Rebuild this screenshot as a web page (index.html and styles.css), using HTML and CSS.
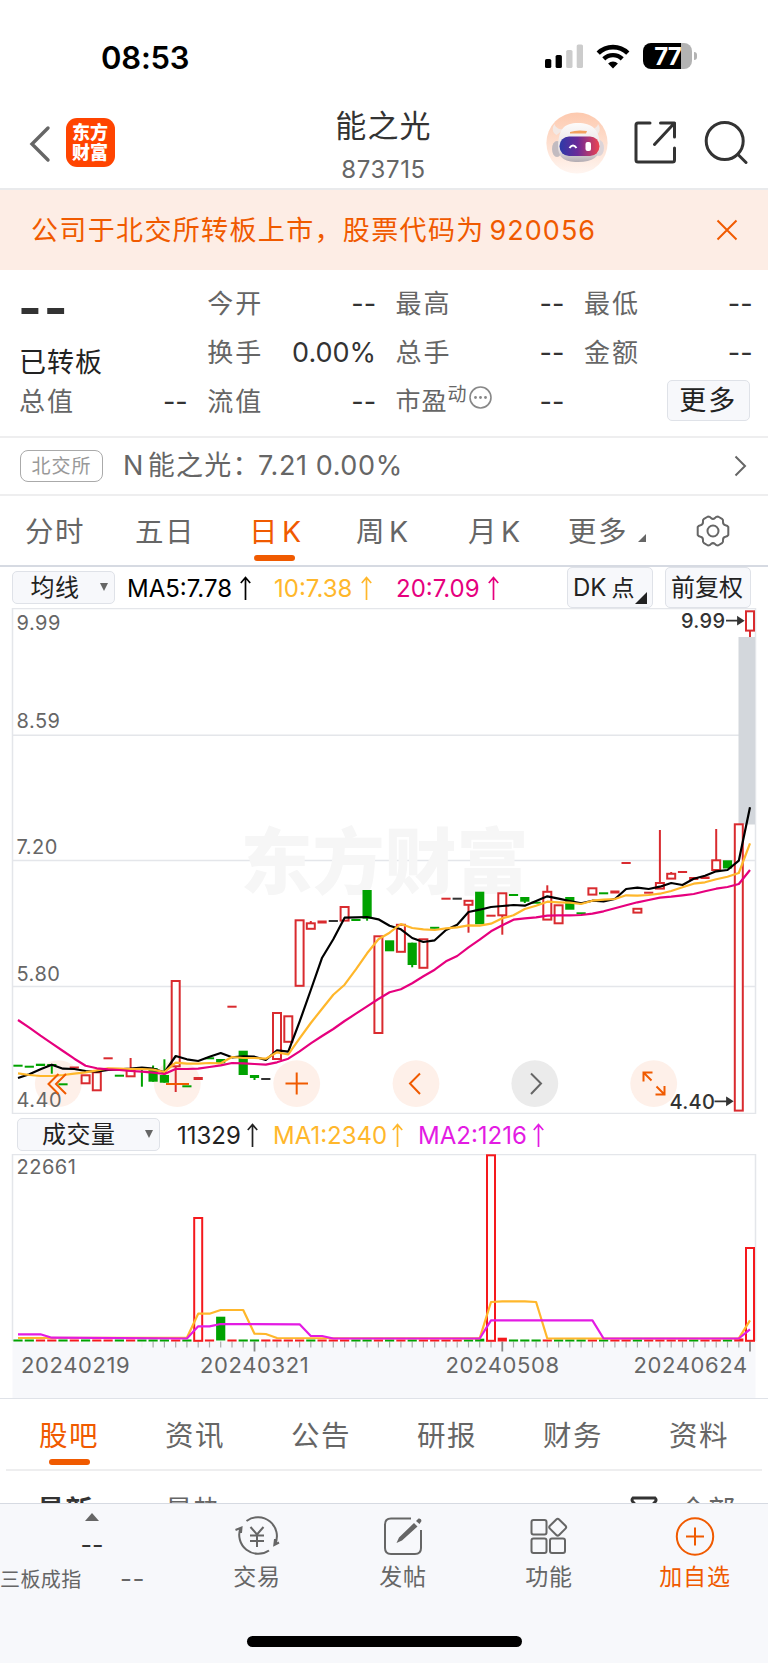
FILE: index.html
```
<!DOCTYPE html>
<html lang="zh-CN">
<head>
  <meta charset="UTF-8">
  <title>能之光 873715</title>
  <link rel="stylesheet" href="styles.css">
</head>
<body>
<div class="app">

  <div class="status-bar">
    <span class="time">08:53</span>
    <div class="status-icons">
      <svg width="38" height="24" viewBox="0 0 38 24">
        <rect x="0" y="15" width="6.3" height="9" rx="1.6"/>
        <rect x="10.6" y="11" width="6.3" height="13" rx="1.6"/>
        <rect x="21.2" y="6" width="6.3" height="18" rx="1.6" fill="#ccc"/>
        <rect x="31.7" y="0.5" width="6.3" height="23.5" rx="1.6" fill="#ccc"/>
      </svg>
      <svg class="wifi" width="34" height="25" viewBox="0 0 34 25">
        <path d="M2.2 9.2a21 21 0 0 1 29.6 0" fill="none" stroke="#000" stroke-width="4.6"/>
        <path d="M7.8 14.9a13.2 13.2 0 0 1 18.4 0" fill="none" stroke="#000" stroke-width="4.4"/>
        <path d="M17 24.5l-4.9-5a7 7 0 0 1 9.8 0z"/>
      </svg>
      <div class="battery"><span>77</span></div>
      <i class="battery-tip"></i>
    </div>
  </div>

  <header class="header">
    <svg class="back" width="22" height="38" viewBox="0 0 22 38"><path d="M19 3L3 19l16 16" fill="none" stroke="#666" stroke-width="3.4" stroke-linecap="round"/></svg>
    <div class="logo"><span>东方</span><span>财富</span></div>
    <div class="title">
      <h1>能之光</h1>
      <p>873715</p>
    </div>
    <svg class="robot" width="62" height="62" viewBox="0 0 62 62">
      <defs>
        <linearGradient id="sky" x1="0" y1="0" x2="0" y2="1"><stop offset="0" stop-color="#fdc9ae"/><stop offset="1" stop-color="#fff5f0"/></linearGradient>
        <linearGradient id="visor" x1="0" y1="0" x2="1" y2="0"><stop offset="0" stop-color="#2b3aa8"/><stop offset=".45" stop-color="#6a2a98"/><stop offset="1" stop-color="#ee4450"/></linearGradient>
        <linearGradient id="shell" x1="0" y1="0" x2="0" y2="1"><stop offset="0" stop-color="#fdfbfa"/><stop offset=".7" stop-color="#e6e0e2"/><stop offset="1" stop-color="#b3acb2"/></linearGradient>
      </defs>
      <circle cx="31" cy="31" r="30.6" fill="url(#sky)"/>
      <path d="M8.500 12c-3 4-2 9 2 11l8-6c-5 1-9-1-10-5zM52 12c3 4 2 9-2 11l-8-6c5 1 9-1 10-5z" fill="#f3e9e5"/>
      <ellipse cx="11" cy="37" rx="5" ry="8" fill="#c2bbc0"/>
      <ellipse cx="53" cy="36" rx="5" ry="8" fill="#dcd4d8"/>
      <path d="M32 11c14 0 21 6 22 22 0 12-7 17-22 17s-20-5-20-17c1-16 6-22 20-22z" fill="url(#shell)"/>
      <path d="M24 20q7-2.500 17-1l-1 2.500H24z" fill="#f3a25f"/>
      <rect x="13.500" y="24.500" width="40" height="19.500" rx="9.500" fill="url(#visor)"/>
      <path d="M23.500 36q3.500-5 7 0" fill="none" stroke="#fff" stroke-width="2"/>
      <rect x="39.500" y="30" width="5.500" height="9" rx="2" fill="#fff"/>
    </svg>
    <svg class="share" width="44" height="44" viewBox="0 0 44 44" fill="none" stroke="#333" stroke-width="3" stroke-linecap="round" stroke-linejoin="round">
      <path d="M16 2H4Q2 2 2 4V39Q2 41 4 41H38.500Q40.500 41 40.500 39V27M26.500 2H40.500V16M40.500 2L20.500 23.500"/>
    </svg>
    <svg class="search" width="44" height="44" viewBox="0 0 44 44" fill="none" stroke="#333" stroke-width="3" stroke-linecap="round">
      <circle cx="20.700" cy="20" r="18.500"/><path d="M34 33.500l8 8"/>
    </svg>
  </header>

  <div class="banner">
    <p>公司于北交所转板上市，股票代码为<b>920056</b></p>
    <svg width="22" height="22" viewBox="0 0 22 22"><path d="M1.500 1.500l19 19M20.500 1.500l-19 19" stroke="#f05a00" stroke-width="2"/></svg>
  </div>

  <section class="quote">
    <div class="price">
      <div class="big">--</div>
      <div class="state">已转板</div>
    </div>
    <dl><dt>今开</dt><dd>--</dd></dl>
    <dl><dt>最高</dt><dd>--</dd></dl>
    <dl><dt>最低</dt><dd>--</dd></dl>
    <dl><dt>换手</dt><dd>0.00%</dd></dl>
    <dl><dt>总手</dt><dd>--</dd></dl>
    <dl><dt>金额</dt><dd>--</dd></dl>
    <dl><dt>总值</dt><dd>--</dd></dl>
    <dl><dt>流值</dt><dd>--</dd></dl>
    <dl>
      <dt class="pe">市盈<sup>动</sup><svg width="23" height="23" viewBox="0 0 23 23"><circle cx="11.500" cy="11.500" r="10.500" fill="none" stroke="#888" stroke-width="1.600"/><g fill="#888"><circle cx="6.500" cy="11.500" r="1.400"/><circle cx="11.500" cy="11.500" r="1.400"/><circle cx="16.500" cy="11.500" r="1.400"/></g></svg></dt>
      <dd>--</dd>
    </dl>
    <button class="more">更多</button>
  </section>

  <div class="related">
    <span class="tag">北交所</span>
    <span class="name"><b>N</b>能之光：</span><span class="num">7.21 0.00%</span>
    <svg width="13" height="22" viewBox="0 0 13 22"><path d="M1.500 1.500L11 11l-9.500 9.500" fill="none" stroke="#666" stroke-width="2"/></svg>
  </div>

  <nav class="periods">
    <span>分时</span>
    <span>五日</span>
    <span class="on">日<b>K</b></span>
    <span>周<b>K</b></span>
    <span>月<b>K</b></span>
    <span>更多<i></i></span>
    <svg width="34" height="32" viewBox="0 0 34 32" fill="none" stroke="#666" stroke-width="2" stroke-linejoin="round">
      <path d="M12 1.500Q14 1.500 15 3Q17 4.800 19 3Q20 1.500 22 1.500L26 3.800Q27.500 5 27 7Q27 9.800 29.500 10.200Q31.500 10.500 32.300 12V20Q31.500 21.500 29.500 21.800Q27 22.200 27 25Q27.500 27 26 28.200L22 30.500Q20 30.500 19 29Q17 27.200 15 29Q14 30.500 12 30.500L8 28.200Q6.500 27 7 25Q7 22.200 4.500 21.800Q2.500 21.500 1.700 20V12Q2.500 10.500 4.500 10.200Q7 9.800 7 7Q6.500 5 8 3.800Z"/>
      <circle cx="17" cy="16" r="5.500"/>
    </svg>
  </nav>

  <div class="ma-row">
    <div class="select">均线<i></i></div>
    <span class="c-black">MA5:7.78<svg class="up" viewBox="0 0 11 24"><path d="M5.500 24V2M.8 7L5.500 1.500 10.200 7"/></svg></span>
    <span class="c-orange">10:7.38<svg class="up" viewBox="0 0 11 24"><path d="M5.500 24V2M.8 7L5.500 1.500 10.200 7"/></svg></span>
    <span class="c-pink">20:7.09<svg class="up" viewBox="0 0 11 24"><path d="M5.500 24V2M.8 7L5.500 1.500 10.200 7"/></svg></span>
    <div class="chip">DK<em>点</em><i></i></div>
    <div class="chip">前复权</div>
  </div>

  <svg class="k-chart" width="768" height="506" viewBox="0 0 768 506">
    <g class="grid">
      <path d="M12.500 .5H755.500V505.500H12.500ZM12.500 127.200H755.500M12.500 252.500H755.500M12.500 378.500H755.500"/>
    </g>
    <text class="watermark" x="240.500" y="279.500">东方财富</text>
    <g class="axis">
      <text x="16.500" y="22.300">9.99</text>
      <text x="16.500" y="120.300">8.59</text>
      <text x="16.500" y="246.300">7.20</text>
      <text x="16.500" y="373.300">5.80</text>
    </g>
    <g fill="#fef0e9">
      <circle cx="58.300" cy="475.600" r="23.400"/>
      <circle cx="177.300" cy="475.600" r="23.400"/>
      <circle cx="296.700" cy="475.600" r="23.400"/>
      <circle cx="416" cy="475.600" r="23.400"/>
      <circle cx="534.800" cy="475.600" r="23.400" fill="#ebebeb"/>
      <circle cx="653.700" cy="475.600" r="23.400"/>
    </g>
    <text class="axis" x="16.500" y="499">4.40</text>
    <rect x="738.500" y="29" width="16.500" height="187.500" fill="#d3d7dc"/>
    <g id="candles"></g>
    <g fill="none" stroke="#f05a00" stroke-width="2">
      <path d="M58.500 466L48.500 476l10 10M66 466l-10 10 10 10"/>
      <path d="M166 476h23M285.500 475.600h22.500M296.700 464.500v22"/>
      <path d="M420 465.500l-10 10 10 10.500"/>
      <path d="M531 465.500l10 10-10 10.500" stroke="#666"/>
      <path d="M643.500 473.500v-9h9M643.500 464.500l8 8M664.500 478v8.500h-9M664.500 486.500l-8-8"/>
    </g>
    <g class="marks">
      <text x="681" y="20.200">9.99</text>
      <path d="M726 12.700h13M738 9.500l5 3.200-5 3.200z"/>
      <text x="669.500" y="501">4.40</text>
      <path d="M714.500 493.300h13M727 490.100l5 3.200-5 3.200z"/>
    </g>
  </svg>

  <div class="vol-row">
    <div class="select">成交量<i></i></div>
    <span class="c-dark">11329<svg class="up" viewBox="0 0 11 24"><path d="M5.500 24V2M.8 7L5.500 1.500 10.200 7"/></svg></span>
    <span class="c-orange">MA1:2340<svg class="up" viewBox="0 0 11 24"><path d="M5.500 24V2M.8 7L5.500 1.500 10.200 7"/></svg></span>
    <span class="c-purple">MA2:1216<svg class="up" viewBox="0 0 11 24"><path d="M5.500 24V2M.8 7L5.500 1.500 10.200 7"/></svg></span>
  </div>

  <svg class="v-chart" width="768" height="244" viewBox="0 0 768 244">
    <rect x="12.500" y="187" width="743" height="57" fill="#f7f8fb"/>
    <path class="grid" d="M12.500 187V.5H755.500V187"/>
    <text class="axis" x="16.500" y="20.300">22661</text>
    <g id="volumes"></g>
    <g class="dates">
      <text x="21" y="219.300">20240219</text>
      <text x="200" y="219.300">20240321</text>
      <text x="445.500" y="219.300">20240508</text>
      <text x="633.500" y="219.300">20240624</text>
    </g>
  </svg>

  <nav class="sections">
    <span class="on">股吧</span>
    <span>资讯</span>
    <span>公告</span>
    <span>研报</span>
    <span>财务</span>
    <span>资料</span>
  </nav>

  <div class="sort">
    <b>最新</b>
    <span>最热</span>
    <svg width="28" height="24" viewBox="0 0 28 24"><path d="M3 2h22q2 2 0 4l-7 8v8l-8-4v-4L3 6q-2-2 0-4z" fill="none" stroke="#333" stroke-width="3"/></svg>
    <span>全部</span>
  </div>

  <footer class="toolbar">
    <div class="index">
      <i></i>
      <b>--</b>
      <p>三板成指<span>--</span></p>
    </div>
    <div class="tool">
      <svg width="46" height="40" viewBox="0 0 46 40" fill="none" stroke="#666" stroke-width="2">
        <path d="M12.500 5A19 19 0 0 1 41 28.500M35 34.500A19 19 0 0 1 6.500 12M1.500 14l6-2.500-.5 5.500M45 26.500l-4.700 2.500.7-6"/>
        <path d="M16.500 11l6.500 7.500 6.500-7.500M23 18.500V31M16 19.500h14M16 25h14"/>
      </svg>
      <span>交易</span>
    </div>
    <div class="tool">
      <svg width="40" height="40" viewBox="0 0 40 40">
        <path d="M28 2.500H8Q2 2.500 2 8.500V32Q2 38 8 38H32Q38 38 38 32V14" fill="none" stroke="#666" stroke-width="2"/>
        <path d="M31 7l3.500 3.500L19 24.500l-5.500 2.500 2.500-5.500zM33 5l2.500-2.500q3-.5 3 2.500L36.500 8z" fill="#666"/>
      </svg>
      <span>发帖</span>
    </div>
    <div class="tool">
      <svg width="40" height="40" viewBox="0 0 40 40" fill="none" stroke="#666" stroke-width="2">
        <rect x="2.500" y="4" width="15" height="14.500" rx="2"/>
        <rect x="2.500" y="22.500" width="15" height="14.500" rx="2"/>
        <rect x="21" y="22.500" width="15" height="14.500" rx="2"/>
        <rect x="22.200" y="4.700" width="13" height="13" rx="2" transform="rotate(45 28.700 11.200)"/>
      </svg>
      <span>功能</span>
    </div>
    <div class="tool add">
      <svg width="40" height="40" viewBox="0 0 40 40" fill="none" stroke="#f05a00" stroke-width="2">
        <circle cx="20" cy="20.500" r="18.200"/><path d="M11 20.500h18M20 11.500v18"/>
      </svg>
      <span>加自选</span>
    </div>
    <div class="home"></div>
  </footer>

</div>
<script src="chart.js"></script>
</body>
</html>
```
FILE: styles.css
```
* {
  box-sizing: border-box;
}
body {
  margin: 0;
  background: #fff;
  color: #333;
  font-family: Inter, "Noto Sans CJK SC", sans-serif;
}
h1, p, dl, dd {
  margin: 0;
  font-weight: normal;
}
b, em {
  font-weight: normal;
  font-style: normal;
}
svg {
  display: block;
  flex: none;
}
.app {
  width: 768px;
  height: 1663px;
  overflow: hidden;
}

/* status bar + header */
.status-bar {
  display: flex;
  justify-content: space-between;
  height: 98px;
  padding: 38px 71px 0 101px;
}
.time {
  font-size: 31px;
  line-height: 39px;
  font-weight: 600;
  letter-spacing: -0.2px;
  color: #000;
}
.status-icons {
  display: flex;
  height: 36px;
  align-items: center;
}
.wifi {
  margin: 0 13px 0 13px;
}
.battery {
  width: 49px;
  height: 26px;
  border-radius: 8px;
  background: linear-gradient(90deg, #000 77%, #b3b3b3 77%);
  color: #fff;
  font-size: 24px;
  font-weight: 700;
  line-height: 27px;
  text-align: center;
  letter-spacing: -1px;
}
.battery-tip {
  width: 3px;
  height: 8px;
  margin-left: 2px;
  border-radius: 0 3px 3px 0;
  background: #b3b3b3;
}
.header {
  display: flex;
  height: 92px;
  padding-left: 29px;
  border-bottom: 2px solid #e9eaec;
}
.back {
  margin-top: 26.5px;
}
.logo {
  width: 49px;
  height: 49px;
  margin: 20px 0 0 14.5px;
  padding-top: 5px;
  border-radius: 11px;
  background: #ff4400;
  color: #fff;
  text-align: center;
}
.logo span {
  display: block;
  font-size: 18px;
  font-weight: 900;
  line-height: 20px;
}
.title {
  width: 240px;
  margin-left: 149px;
  text-align: center;
}
.title h1 {
  margin-top: 8px;
  font-size: 31px;
  line-height: 40px;
  letter-spacing: 1.2px;
}
.title p {
  margin-top: 9px;
  font-size: 24px;
  line-height: 30px;
  letter-spacing: 0.6px;
  color: #666;
}
.robot {
  margin: 14px 0 0 42px;
}
.share {
  margin: 23px 0 0 26px;
}
.search {
  margin: 23px 0 0 26px;
}

/* notice */
.banner {
  display: flex;
  justify-content: space-between;
  align-items: center;
  height: 80px;
  padding: 0 30px 0 31px;
  background: #fdede5;
  color: #f05a00;
  font-size: 27px;
  letter-spacing: 1.35px;
}
.banner p {
  padding-bottom: 3px;
}
.banner b {
  margin-left: 5px;
  letter-spacing: 1px;
}

/* quote */
.quote {
  display: grid;
  grid-template-columns: repeat(4, 168.8px);
  grid-template-rows: repeat(3, 49px);
  column-gap: 19.5px;
  height: 168px;
  padding: 9px 0 0 19px;
  border-bottom: 2px solid #eeeeef;
}
.price {
  grid-row: span 2;
}
.big {
  height: 57px;
  margin-left: -1px;
  font-size: 51px;
  font-weight: 700;
  line-height: 58px;
  letter-spacing: 2px;
}
.state {
  font-size: 27px;
  line-height: 54px;
  letter-spacing: 1px;
  color: #222;
}
.quote dl {
  display: flex;
  justify-content: space-between;
  line-height: 49px;
  font-size: 26px;
}
.quote dt {
  color: #666;
  letter-spacing: 2px;
}
.quote dd {
  font-size: 27px;
}
.quote .pe {
  display: flex;
  font-size: 25px;
  letter-spacing: 1px;
}
.pe sup {
  font-size: 19px;
  line-height: 36px;
  letter-spacing: 0;
}
.pe svg {
  margin: 9px 0 0 2px;
}
.more {
  width: 83px;
  height: 41px;
  margin: 3px 3px 0 auto;
  padding: 0;
  border: 1.500px solid #dfe2e8;
  border-radius: 5px;
  background: #f7f8fb;
  color: #222;
  font: inherit;
  font-size: 27px;
  line-height: 38px;
  letter-spacing: 2px;
}
.related {
  display: flex;
  align-items: center;
  height: 58px;
  padding: 0 21px 0 20px;
  border-bottom: 2px solid #eeeeef;
  color: #666;
  font-size: 27px;
  line-height: 56px;
}
.tag {
  width: 83px;
  height: 32px;
  margin-right: 20px;
  border: 1.500px solid #aaa;
  border-radius: 8px;
  color: #999;
  font-size: 19px;
  line-height: 31px;
  letter-spacing: 1px;
  text-align: center;
}
.related .name {
  width: 135px;
  height: 56px;
  letter-spacing: 1.3px;
  white-space: nowrap;
}
.related .name b {
  margin-right: 3px;
}
.related .num {
  height: 56px;
  letter-spacing: 0.6px;
}
.related svg {
  margin-left: auto;
}

/* period tabs */
.periods {
  display: grid;
  grid-template-columns: 110px 114px 107px 112px 100px 128px 34px;
  height: 71px;
  padding-left: 25px;
  border-bottom: 2px solid #d6dae2;
  color: #666;
  font-size: 28.5px;
  line-height: 72px;
  letter-spacing: 1.4px;
}
.periods b {
  margin-left: 3px;
}
.periods .on, .sections .on {
  position: relative;
  color: #f05a00;
}
.periods .on::after, .sections .on::after {
  content: "";
  position: absolute;
  left: 5px;
  bottom: 7px;
  width: 41px;
  height: 6px;
  border-radius: 3px;
  background: #f05a00;
}
.periods i {
  display: inline-block;
  margin-left: 10px;
  border-left: 8px solid transparent;
  border-bottom: 8px solid #666;
}
.periods svg {
  margin-top: 19px;
}

/* indicator rows */
.ma-row, .vol-row {
  display: flex;
  align-items: center;
  height: 41px;
  font-size: 24px;
  color: #222;
}
.ma-row {
  padding: 0 0 0 12px;
}
.ma-row > span, .vol-row > span {
  display: flex;
  align-items: center;
  justify-content: space-between;
  padding-top: 2px;
  line-height: 34px;
}
.up {
  width: 11px;
  height: 24px;
  margin-top: -2px;
  fill: none;
  stroke: currentColor;
  stroke-width: 1.7;
}
.select {
  position: relative;
  width: 103px;
  height: 33px;
  padding-left: 17.5px;
  border: 1.500px solid #dfe2e8;
  border-radius: 5px;
  background: #f7f8fb;
  line-height: 32px;
  letter-spacing: 0.5px;
}
.select i {
  position: absolute;
  right: 6px;
  top: 11px;
  border: 4.500px solid transparent;
  border-top: 8px solid #666;
  border-bottom: 0;
}
.c-black { color: #000; width: 124px; margin-left: 12px; }
.c-dark { color: #222; width: 81px; margin-left: 17px; }
.c-orange { color: #ffb72b; }
.c-pink { color: #e6007e; width: 103px; margin-left: 24px; }
.c-purple { color: #e31be3; width: 126px; margin-left: 15px; }
.ma-row .c-orange { width: 98px; margin-left: 23px; }
.vol-row .c-orange { width: 130px; margin-left: 15px; }
.chip {
  position: relative;
  width: 86px;
  height: 41px;
  margin-left: 12px;
  padding-left: 5px;
  border: 1.500px solid #dfe2e8;
  border-radius: 5px;
  background: #f7f8fb;
  line-height: 40px;
  white-space: nowrap;
}
.c-pink + .chip {
  margin-left: 68px;
}
.chip em {
  margin-left: 5px;
  font-size: 23px;
}
.chip i {
  position: absolute;
  right: 5px;
  bottom: 3px;
  border-left: 12px solid transparent;
  border-bottom: 12px solid #222;
}
.vol-row {
  height: 40px;
  padding: 1px 0 0 17px;
}
.vol-row .select {
  width: 143px;
  padding-left: 24px;
}

/* charts */
.grid, .grid path {
  fill: none;
  stroke: #e4e6ea;
  stroke-width: 1.5;
}
.axis {
  font-size: 20px;
  letter-spacing: 0.5px;
  fill: #666;
}
.dates {
  font-size: 22px;
  letter-spacing: 0.6px;
  fill: #666;
}
.marks {
  font-size: 20px;
  font-weight: 500;
  fill: #333;
  stroke: none;
}
.marks path {
  stroke: #333;
  stroke-width: 1.8;
}
.marks text {
  letter-spacing: 0.3px;
}
.watermark {
  font-size: 72px;
  font-weight: 900;
  fill: #f6f6f6;
}
.v-chart {
  box-sizing: content-box;
  border-bottom: 1px solid #dfe2e8;
}

/* lower tabs */
.sections {
  display: flex;
  height: 72px;
  margin: 0 6px;
  padding-left: 33px;
  border-bottom: 2px solid #eeeeef;
  color: #666;
  font-size: 28.5px;
  line-height: 73px;
  letter-spacing: 1.4px;
}
.sections span {
  width: 126px;
  flex: none;
}
.sections .on::after {
  left: 10px;
  bottom: 4px;
}
.sort {
  display: flex;
  height: 32px;
  padding-left: 37px;
  overflow: hidden;
  color: #666;
  font-size: 27.5px;
  line-height: 79px;
  letter-spacing: 0.8px;
}
.sort b {
  width: 128px;
  font-weight: 700;
  color: #333;
}
.sort svg {
  margin: 25px 21px 0 auto;
}
.sort span:last-child {
  margin-right: 32px;
}

/* toolbar */
.toolbar {
  display: grid;
  grid-template-columns: 184px repeat(4, 146px);
  grid-template-rows: 132px 29px;
  height: 161px;
  border-top: 1.500px solid #d6dae2;
  background: #f7f8fb;
  color: #666;
}
.index i {
  display: block;
  width: 14px;
  margin: 9px 0 0 85px;
  border: 7px solid transparent;
  border-top: 0;
  border-bottom: 8px solid #666;
}
.index b {
  display: block;
  margin: 8px 0 0 80.5px;
  font-size: 25px;
  line-height: 32px;
  color: #333;
}
.index p {
  margin-top: 2px;
  font-size: 20px;
  line-height: 32px;
  letter-spacing: 0.4px;
  white-space: nowrap;
}
.index p span {
  margin-left: 38.5px;
  font-size: 26px;
  vertical-align: -1px;
}
.tool {
  display: flex;
  flex-direction: column;
  align-items: center;
  padding-top: 12px;
  font-size: 23px;
}
.tool span {
  margin-top: 4px;
  line-height: 34px;
  letter-spacing: 0.8px;
}
.tool.add {
  color: #f05a00;
}
.home {
  grid-column: 1 / -1;
  width: 275px;
  height: 11px;
  margin-left: 247px;
  border-radius: 6px;
  background: #000;
}
```
FILE: chart.js
```
const RED = "#d92b2f", GREEN = "#00a200", DARK = "#333";
const X0 = 18, STEP = 11.262;
const x = i => +(X0 + i * STEP).toFixed(1);

// [colour, top, bottom, wick top, wick bottom]; one number only = flat day
const candles = [
  ["g",457.7],["g",458.7],["g",455.7,458],["g",456,458,456,465.7],["g",476.3],["r",459.5],["r",467,475],["r",464,482],["r",450.3],["g",467.7],
  ["r",462,468,450,468],["g",461,462,461,478.7],["g",460,473.7,457.5,473.7],["g",467,474.7,451.3,474.7],["r",372.7,458,372.7,484],["g",478.3],["r",469,472],["g",450.3],["g",451,455.3],["r",398.7],
  ["g",442.7,467],["g",467,470,467,472],["k",471],["r",404.7,450.7],["r",408,433.5],["r",312,377.5],["r",315,320.5,313,320.5],["r",312.5,315.5],["k",313],["r",298.7,312.3],
  ["g",312],["g",282,310.7,282,312.7],["r",328,424.7],["g",332.3,343.3],["r",316.5,343.5],["g",334.7,357,334.7,359.3],["r",331,359.5],["g",319.8],["r",290.7],["k",290.7],
  ["r",292.5,296.5,292.5,324.7],["g",283.7,316.3],["r",307.7],["r",285,307,285,326.7],["g",287],["g",289,293.7,289,295],["g",294.7],["r",283.5,311.3,277.3,311.3],["r",297,315],["g",289,301.7],
  ["g",305.3],["r",280,286.3],["g",285.3],["r",282.5,285.5],["r",255],["r",300.5,304.3],["r",284.7],["r",274.7,280.3,222,280.3],["r",265.5,270.3,264,270.3],["r",264],
  ["r",269,272],["r",268.5,271],["r",252,261.7,221,261.7],["g",252.3,260.5],["r",216,502.3],["r",3,22.3,3,29]
];

const ma5 = [
  470,466.3,461.3,456.7,460.7,461,463,463.7,462,461.3,
  460.7,459.7,460.7,464.3,448,451.3,453,448.7,445,449.3,
  448.3,448.7,452,442.3,443.7,413.7,382,349.7,331.3,309.7,
  309.3,309,311.3,317.7,321.3,330,334,332.3,322,316.7,
  304,301.7,299,298,297,297.7,293,288.3,290.7,293,
  295.3,292.7,293.3,291,281,279.7,281,278.7,275,277,
  270.7,267.7,263.3,262,252.7,199.3
];
const ma10 = [
  465.3,467,468,468,467,465.7,464.3,462.3,460.3,460.7,
  461,461,461.7,464,454.7,455.7,455.7,455,455.3,449,
  450,450,450.7,444.3,446.3,430.3,415,400.7,386.7,376.7,
  361.3,345.3,331.3,324.7,316,320,321.3,322,320.3,319.3,
  317.3,317.7,315.7,310.3,307.3,301,297.7,293.7,294.3,294.7,
  296,292.7,291.7,291,287.3,287.7,287,285.7,283,279.3,
  275.7,274.3,271.3,268.7,265,235.3
];
const ma20 = [
  412,419.7,427.7,435.3,443,450.7,457.7,460.3,461.3,462,
  463,463.7,464.7,466,461,461,460.7,459,457.3,455,
  455.3,456,456.7,454.3,450.7,443.3,435.3,428,421,413,
  405.7,398.3,391,384.3,381.3,375.3,368.3,361.7,353.3,348,
  339.3,331.7,323.3,317.3,311.7,310.3,309.3,307.7,307.3,307.3,
  307,305.7,303.3,300.3,297.3,294.3,292,289.7,288.7,287.3,
  286,283.3,280.7,279,276,262
];

function line(points, color) {
  return `<polyline points="${points.map(p => p.join(",")).join(" ")}" fill="none" stroke="${color}" stroke-width="2.2" stroke-linejoin="round"/>`;
}

function box(cx, top, bottom, color, hollow) {
  if (hollow) {
    return `<rect x="${cx - 4}" y="${top + 0.3}" width="8" height="${bottom - top}" fill="#fff" stroke="${color}" stroke-width="2"/>`;
  }
  return `<rect x="${cx - 4.6}" y="${top}" width="9.2" height="${bottom - top}" fill="${color}"/>`;
}

let out = "";
candles.forEach(([c, top, bottom, hi, lo], i) => {
  const color = { r: RED, g: GREEN, k: DARK }[c];
  const cx = x(i);
  if (bottom === undefined) {
    out += box(cx, top - 1, top + 1, color);
    return;
  }
  if (hi !== undefined) {
    out += `<path d="M${cx} ${hi}V${lo}" stroke="${color}" stroke-width="2"/>`;
  }
  out += box(cx, top, bottom, color, c === "r" && bottom - top > 3.5);
});
out += line(ma5.map((y, i) => [x(i), y]), "#000");
out += line(ma10.map((y, i) => [x(i), y]), "#ffb72b");
out += line(ma20.map((y, i) => [x(i), y]), "#e6007e");
document.getElementById("candles").innerHTML = out;

// volume
const colors = "ggrrgrgrrgrgggrgrrgrggrrrrgrrrggrgrgrrrrgggrgggrgggrgrrgrrrrgrrgrr".split("");
colors[42] = "r";
const volumes = { 16: 63.7, 18: 162.7, 41: 184.7, 42: 1, 43: 183.7, 64: 184.5, 65: 93.7 };
const BASE = 187;
out = "";
for (let i = 11; i < 66; i++) {
  const major = i === 21 || i === 43 || i === 65;
  out += `<path d="M${x(i)} 187.5V${major ? 197.5 : 193.5}" stroke="${major ? "#888" : i < 12 ? "#eee" : "#aaa"}" stroke-width="${major ? 1.8 : 1.2}"/>`;
}
colors.forEach((c, i) => {
  const color = c === "r" ? "#f5191d" : GREEN;
  const top = volumes[i];
  if (top !== undefined && BASE - top > 5) {
    out += box(x(i), top, BASE - 0.5, color, c === "r");
  } else {
    out += box(x(i), top || 185.5, 187.5, color);
  }
});
const vma1 = [[0,184],[15,183.7],[16,159.7],[17,159.7],[18,156],[20,156],[21,179.7],[22,180],[23,184],[41,184.3],[42,148],[43,147.3],[45,147.3],[46,148],[47,184.5],[64,184.3],[65,166.3]];
const vma2 = [[0,180.3],[2,180.3],[3,183.7],[15,184.5],[16,172.3],[17,172.3],[18,170],[25,170.3],[26,182],[27,182],[28,184.5],[41,184.5],[42,166.3],[51,166.3],[52,184.5],[64,184.5],[65,175.3]];
out += line(vma1.map(([i, y]) => [x(i), y]), "#ffb72b");
out += line(vma2.map(([i, y]) => [x(i), y]), "#e31be3");
document.getElementById("volumes").innerHTML = out;
```
